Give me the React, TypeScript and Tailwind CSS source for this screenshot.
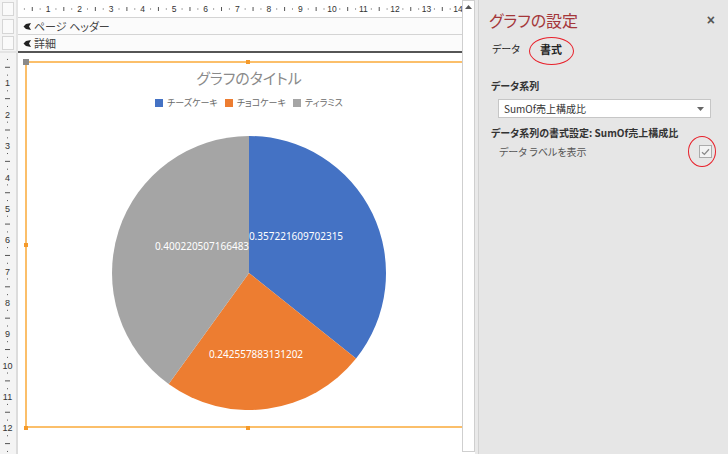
import React from "react";

const JP = "'Noto Sans CJK JP', 'Noto Sans', sans-serif";

function TopRuler() {
  const items: React.ReactNode[] = [];
  const s = 31.54;
  for (let n = 0; n <= 14; n++) {
    const x = -1.5 + s * n;
    if (n > 0)
      items.push(
        <text key={"t" + n} x={x} y={12} fontSize={8.5} textAnchor="middle" fill="#333" fontFamily="'Liberation Sans', sans-serif">
          {n}
        </text>
      );
    const q1 = x + s * 0.25;
    const q2 = x + s * 0.5;
    const q3 = x + s * 0.75;
    items.push(<rect key={"a" + n} x={q1 - 0.5} y={8.5} width={1} height={1} fill="#555" />);
    items.push(<rect key={"b" + n} x={q2 - 0.5} y={7} width={1} height={4} fill="#555" />);
    items.push(<rect key={"c" + n} x={q3 - 0.5} y={8.5} width={1} height={1} fill="#555" />);
  }
  return (
    <svg width="444" height="18" className="block">
      {items}
    </svg>
  );
}

function LeftRuler() {
  const items: React.ReactNode[] = [];
  const s = 31.36;
  for (let n = 0; n <= 12; n++) {
    const y = -1.4 + s * n;
    if (n > 0)
      items.push(
        <text key={"t" + n} x={7.5} y={y + 3.5} fontSize={9} textAnchor="middle" fill="#333" fontFamily="'Liberation Sans', sans-serif">
          {n}
        </text>
      );
    const q1 = y + s * 0.25;
    const q2 = y + s * 0.5;
    const q3 = y + s * 0.75;
    items.push(<rect key={"a" + n} x={7} y={q1 - 0.5} width={1} height={1} fill="#555" />);
    items.push(<rect key={"b" + n} x={5} y={q2 - 0.5} width={5} height={1} fill="#555" />);
    items.push(<rect key={"c" + n} x={7} y={q3 - 0.5} width={1} height={1} fill="#555" />);
  }
  return (
    <svg width="15" height="401" className="block">
      {items}
    </svg>
  );
}

function SectionIcon() {
  return (
    <svg width="9" height="9" viewBox="0 0 9 9" className="block">
      <path d="M8 1 L3 2 L0.5 4.5 L3 7 L8 8 L6 4.5 Z" fill="#222" />
    </svg>
  );
}

function Pie() {
  const cx = 138;
  const cy = 138;
  const r = 137;
  const pt = (deg: number) => {
    const a = (deg * Math.PI) / 180;
    return [cx + r * Math.sin(a), cy - r * Math.cos(a)];
  };
  const vals = [0.357221609702315, 0.242557883131202, 0.400220507166483];
  const colors = ["#4472c4", "#ed7d31", "#a5a5a5"];
  let acc = 0;
  const paths = vals.map((v, i) => {
    const a0 = acc * 360;
    acc += v;
    const a1 = acc * 360;
    const [x0, y0] = pt(a0);
    const [x1, y1] = pt(a1);
    const large = a1 - a0 > 180 ? 1 : 0;
    return (
      <path
        key={i}
        d={`M${cx} ${cy} L${x0} ${y0} A${r} ${r} 0 ${large} 1 ${x1} ${y1} Z`}
        fill={colors[i]}
      />
    );
  });
  const font = "'Noto Sans', sans-serif";
  return (
    <svg width="276" height="276" className="block">
      {paths}
      <text x={185} y={105} fontSize={10} fill="#fff" textAnchor="middle" fontFamily={font}>
        0.357221609702315
      </text>
      <text x={91} y={115} fontSize={10} fill="#fff" textAnchor="middle" fontFamily={font}>
        0.400220507166483
      </text>
      <text x={145} y={223} fontSize={10} fill="#fff" textAnchor="middle" fontFamily={font}>
        0.242557883131202
      </text>
    </svg>
  );
}

function LegendItem({ color, label }: { color: string; label: string }) {
  return (
    <div className="flex items-center gap-[4px]">
      <span className={`w-[8px] h-[8px] ${color}`} />
      <span>{label}</span>
    </div>
  );
}

export default function App() {
  return (
    <div
      className="w-[728px] h-[454px] flex bg-white overflow-hidden [font-feature-settings:'palt']"
      style={{ fontFamily: JP }}
    >
      {/* Design area */}
      <div className="w-[462px] h-full flex flex-col bg-white">
        {/* ruler row */}
        <div className="h-[18px] flex shrink-0">
          <div className="w-[16px] h-full p-[2px] bg-[#f4f4f4]">
            <div className="w-full h-full border border-[#d6d6d6] bg-[#fafafa]" />
          </div>
          <div className="w-[2px] h-full bg-[#e4e4e4]" />
          <div className="flex-1 h-full border-b border-[#d4d4d4] bg-white overflow-hidden">
            <TopRuler />
          </div>
        </div>
        {/* page header row */}
        <div className="h-[17px] flex shrink-0">
          <div className="w-[16px] h-full p-[1px_2px] bg-[#f4f4f4]">
            <div className="w-full h-full border border-[#d6d6d6] bg-[#fafafa]" />
          </div>
          <div className="w-[2px] h-full bg-[#e4e4e4]" />
          <div className="flex-1 h-full border-b border-[#d4d4d4] bg-[#fbfbfb] flex items-center pl-[5px] gap-[2px] text-[11px] text-[#444]">
            <SectionIcon />
            <span>ページ ヘッダー</span>
          </div>
        </div>
        {/* detail row */}
        <div className="h-[16px] flex shrink-0">
          <div className="w-[16px] h-full p-[1px_2px] bg-[#f4f4f4]">
            <div className="w-full h-full border border-[#d6d6d6] bg-[#fafafa]" />
          </div>
          <div className="w-[2px] h-full bg-[#e4e4e4]" />
          <div className="flex-1 h-full bg-[#fbfbfb] flex items-center pl-[5px] gap-[2px] text-[11px] text-[#444]">
            <SectionIcon />
            <span>詳細</span>
          </div>
        </div>
        <div className="h-[2px] flex shrink-0">
          <div className="w-[18px] h-full bg-[#e4e4e4]" />
          <div className="flex-1 h-full bg-[#555]" />
        </div>
        {/* body */}
        <div className="flex-1 flex min-h-0">
          <div className="w-[16px] h-full bg-[#f4f4f4] overflow-hidden">
            <LeftRuler />
          </div>
          <div className="w-[2px] h-full bg-[#dcdcdc]" />
          <div className="flex-1 h-full relative overflow-hidden bg-white">
            {/* chart control */}
            <div className="absolute left-[7px] top-[8px] w-[446px] h-[367px] border-t-[2px] border-l-[2px] border-b-[2px] border-[#fbbf6a]">
              <div className="flex flex-col items-center">
                <div className="pt-[5px] text-[15px] leading-[19px] text-[#8a8a8a]">グラフのタイトル</div>
                <div className="mt-[9px] flex items-center gap-[7px] text-[9px] leading-[14px] text-[#6a6a6a]">
                  <LegendItem color="bg-[#4472c4]" label="チーズケーキ" />
                  <LegendItem color="bg-[#ed7d31]" label="チョコケーキ" />
                  <LegendItem color="bg-[#a5a5a5]" label="ティラミス" />
                </div>
                <div className="mt-[25px]">
                  <Pie />
                </div>
              </div>
            </div>
            {/* handles */}
            <div className="absolute left-[5px] top-[6px] w-[6px] h-[6px] bg-[#8a8a8a]" />
            <div className="absolute left-[228px] top-[7px] w-[4px] h-[4px] bg-[#f59a2a]" />
            <div className="absolute left-[6px] top-[190px] w-[4px] h-[4px] bg-[#f59a2a]" />
            <div className="absolute left-[6px] top-[373px] w-[4px] h-[4px] bg-[#f59a2a]" />
            <div className="absolute left-[228px] top-[373px] w-[4px] h-[4px] bg-[#f59a2a]" />
          </div>
        </div>
      </div>

      {/* vertical scrollbar */}
      <div className="w-[13px] h-[452px] border border-[#cfcfcf] bg-white flex flex-col">
        <div className="h-[12px] flex items-center justify-center">
          <svg width="7" height="4" viewBox="0 0 7 4">
            <path d="M0 4 L3.5 0 L7 4 Z" fill="#555" />
          </svg>
        </div>
      </div>
      <div className="w-[3px] h-full bg-[#e9e9e9]" />

      {/* settings panel */}
      <div className="flex-1 h-full bg-[#e6e6e6] relative border-l border-[#d2d2d2]">
        <div className="flex items-center justify-between pl-[10px] pr-[13px] pt-[10px]">
          <div className="text-[16px] leading-[20px] text-[#a4373a]">グラフの設定</div>
          <div className="text-[14px] leading-[16px] font-bold text-[#555]" style={{ fontFamily: "'Liberation Sans', sans-serif" }}>
            ×
          </div>
        </div>
        <div className="flex items-center pl-[13px] mt-[12px] gap-[20px] text-[10px] leading-[14px] text-[#222]">
          <span>データ</span>
          <span className="font-bold text-[11px]">書式</span>
        </div>
        <div className="pl-[12px] mt-[23px] text-[10px] leading-[14px] font-bold text-[#333]">データ系列</div>
        <div className="ml-[19px] mr-[17px] mt-[6px] h-[19px] bg-white border border-[#c6c6c6] flex items-center justify-between pl-[5px] pr-[6px] text-[10px] text-[#333]">
          <span>SumOf売上構成比</span>
          <svg width="7" height="4" viewBox="0 0 7 4">
            <path d="M0 0 L7 0 L3.5 4 Z" fill="#666" />
          </svg>
        </div>
        <div className="pl-[12px] mt-[8px] text-[10px] leading-[14px] font-bold text-[#333]">データ系列の書式設定: SumOf売上構成比</div>
        <div className="flex items-center justify-between pl-[20px] pr-[16px] mt-[4px] h-[15px] text-[10px] text-[#555]">
          <span>データ ラベルを表示</span>
          <div className="w-[13px] h-[13px] border border-[#ababab] bg-[#f3f3f3] flex items-center justify-center">
            <svg width="9" height="8" viewBox="0 0 9 8">
              <path d="M1 4.2 L3.4 6.4 L8 1.2" fill="none" stroke="#8a8a8a" strokeWidth="1.3" />
            </svg>
          </div>
        </div>

        {/* red annotations */}
        <div className="absolute left-[50px] top-[37px] w-[45px] h-[28px] rounded-[50%] border-[1.5px] border-[#e8202a]" />
        <div className="absolute left-[209px] top-[136px] w-[28px] h-[31px] rounded-[50%] border-[1.5px] border-[#e8202a]" />
      </div>
    </div>
  );
}
